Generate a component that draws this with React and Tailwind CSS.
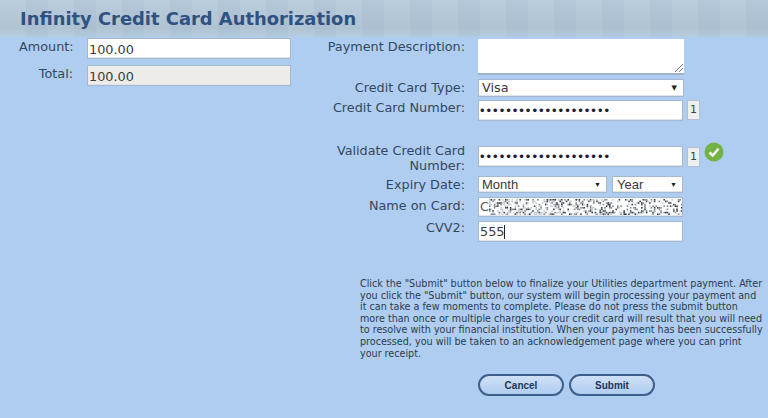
const FONT = "font-['DejaVu_Sans','Verdana',sans-serif]";

function Noise() {
  const cells = [];
  let seed = 11;
  for (let y = 0; y < 10; y++) {
    for (let x = 0; x < 122; x++) {
      seed = (seed * 1103515245 + 12345) & 0x7fffffff;
      const r = (seed >> 9) % 100;
      const fade = x > 76 ? 26 : x > 46 ? 38 : 46;
      if (r < fade) {
        const shade = r < 10 ? "#39424c" : r < 21 ? "#7d858e" : "#c3c8cc";
        cells.push(<rect key={x + "-" + y} x={x * 1.6} y={y * 1.6} width="1.6" height="1.6" fill={shade} />);
      }
    }
  }
  return (
    <svg width="195" height="16" viewBox="0 0 195 16" className="block shrink-0">
      {cells}
    </svg>
  );
}

function Label({ children, className = "" }) {
  return <div className={"w-[155px] pr-[13px] text-right text-[12.8px] leading-[15px] text-[#33485f] " + className}>{children}</div>;
}

function Field({ children, className = "" }) {
  return (
    <div className={"flex items-center border border-[#a4b8cf] text-[#3a3a3a] shadow-[inset_0_-1px_0_#dde4ec] " + className}>
      {children}
    </div>
  );
}

function Dots() {
  return (
    <span className="pl-[1px] font-['Liberation_Sans',sans-serif] text-[13px] leading-none tracking-[2px] text-[#1c2028]">
      ••••••••••••••••••••
    </span>
  );
}

function Arrow() {
  return <span className="text-[7px] leading-none text-[#20242a]">▼</span>;
}

function Digit() {
  return (
    <div className="ml-[4px] flex h-[20px] w-[13px] items-center justify-center border border-[#b3c0cf] bg-[#eef0ef] text-[11px] text-[#3b3f44]">
      1
    </div>
  );
}

function Btn({ children }) {
  return (
    <button className="h-[22px] w-[86px] rounded-full border-2 border-[#3d5f8c] bg-gradient-to-b from-[#cfe0f7] to-[#afcdf1] font-['Liberation_Sans',sans-serif] text-[10px] font-bold text-[#1d3657]">
      {children}
    </button>
  );
}

export default function App() {
  return (
    <div className={"h-[418px] w-[768px] overflow-hidden bg-[#afcdf1] " + FONT}>
      <div className="h-[37px] bg-[linear-gradient(180deg,rgba(190,210,230,0.1)_0%,rgba(150,170,185,0.28)_75%,rgba(175,205,230,0.35)_100%),repeating-linear-gradient(90deg,#bacddd_0px,#bacddd_26px,#b3c7d9_26px,#b3c7d9_48px)] pl-[20px] pt-[7px] text-[17.9px] font-bold leading-[23px] text-[#2f5282]">
        Infinity Credit Card Authorization
      </div>

      <div className="flex pt-[1px]">
        <div className="flex w-[323px] flex-col gap-[6px] pl-[19px]">
          <div className="flex items-start">
            <div className="w-[68px] pt-[1px] text-left text-[12.8px] leading-[15px] text-[#33485f]">Amount:</div>
            <Field className="h-[21px] w-[204px] bg-white pl-[1px] pt-[2px] text-[12.8px]">100.00</Field>
          </div>
          <div className="flex items-start">
            <div className="w-[68px] pr-[14px] pt-[1px] text-right text-[12.8px] leading-[15px] text-[#33485f]">Total:</div>
            <Field className="h-[21px] w-[204px] bg-[#eeece8] pl-[1px] pt-[2px] text-[12.8px]">100.00</Field>
          </div>
        </div>

        <div className="flex flex-col pt-[1px]">
          <div className="flex items-start">
            <Label>Payment Description:</Label>
            <div className="relative h-[36px] w-[206px] border-b-2 border-[#9db3cd] bg-white">
              <svg width="10" height="10" viewBox="0 0 10 10" className="absolute bottom-0 right-0">
                <path d="M1 9 9 1M5 9 9 5" stroke="#6f7780" strokeWidth="1" />
              </svg>
            </div>
          </div>
          <div className="mt-[4px] flex items-center">
            <Label className="mb-[2px]">Credit Card Type:</Label>
            <Field className="h-[18px] w-[206px] justify-between bg-white pl-[3px] pr-[6px] text-[12.8px]">
              <span>Visa</span>
              <Arrow />
            </Field>
          </div>
          <div className="mt-[3px] flex items-start">
            <Label>Credit Card Number:</Label>
            <Field className="h-[21px] w-[205px] bg-white"><Dots /></Field>
            <Digit />
          </div>
          <div className="mt-[22px] flex items-start">
            <Label>Validate Credit Card Number:</Label>
            <Field className="mt-[3px] h-[21px] w-[205px] bg-white"><Dots /></Field>
            <div className="mt-[4px]"><Digit /></div>
            <svg width="20" height="20" viewBox="0 0 20 20" className="ml-[4px] mt-[-1px]">
              <circle cx="10" cy="10" r="9.5" fill="#73b343" />
              <path d="M5.5 10.5 8.7 13.5 14.5 6.8" fill="none" stroke="#ffffff" strokeWidth="2.4" />
            </svg>
          </div>
          <div className="mt-[3px] flex items-center">
            <Label>Expiry Date:</Label>
            <div className="flex w-[205px] justify-between">
              <Field className="h-[17px] w-[129px] justify-between bg-white pl-[3px] pr-[5px] font-['Liberation_Sans',sans-serif] text-[13px]">
                <span>Month</span>
                <Arrow />
              </Field>
              <Field className="h-[17px] w-[71px] justify-between bg-white pl-[4px] pr-[5px] font-['Liberation_Sans',sans-serif] text-[13px]">
                <span>Year</span>
                <Arrow />
              </Field>
            </div>
          </div>
          <div className="mt-[4px] flex items-center">
            <Label className="mb-[3px]">Name on Card:</Label>
            <Field className="h-[20px] w-[205px] overflow-hidden bg-white pl-[1px] text-[12.8px]">
              <span className="leading-none text-[#555]">C</span>
              <Noise />
            </Field>
          </div>
          <div className="mt-[4px] flex items-start">
            <Label className="mt-[-1px]">CVV2:</Label>
            <Field className="h-[21px] w-[205px] bg-white pl-[1px] text-[12.8px]">
              <span>555</span>
              <span className="h-[14px] w-px bg-[#222]" />
            </Field>
          </div>
          <div className="ml-[37px] mt-[36px] w-[405px] whitespace-nowrap text-[9.6px] leading-[11.6px] text-[#2c3b4d]">
            Click the "Submit" button below to finalize your Utilities department payment. After<br />
            you click the "Submit" button, our system will begin processing your payment and<br />
            it can take a few moments to complete. Please do not press the submit button<br />
            more than once or multiple charges to your credit card will result that you will need<br />
            to resolve with your financial institution. When your payment has been successfully<br />
            processed, you will be taken to an acknowledgement page where you can print<br />
            your receipt.
          </div>
          <div className="ml-[155px] mt-[15px] flex gap-[5px]">
            <Btn>Cancel</Btn>
            <Btn>Submit</Btn>
          </div>
        </div>
      </div>
    </div>
  );
}
